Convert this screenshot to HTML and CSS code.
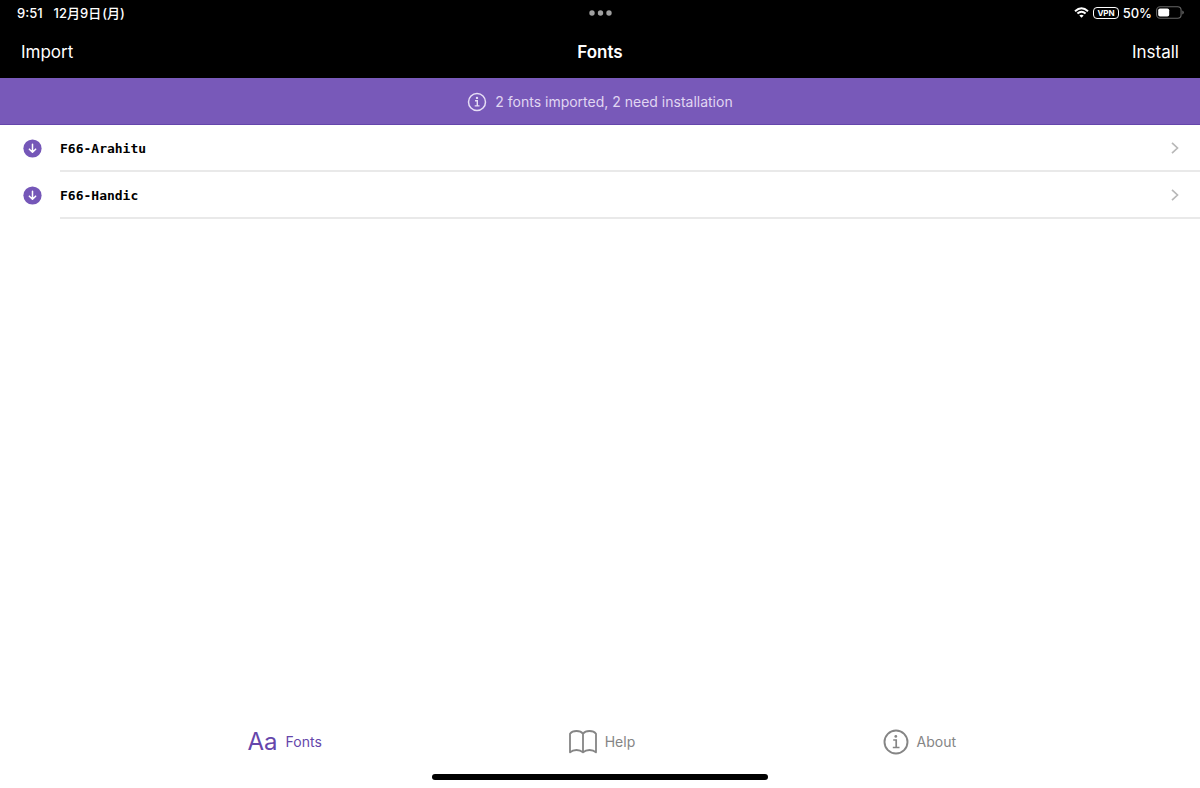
FILE: index.html
```html
<!DOCTYPE html>
<html lang="en">
<head>
<meta charset="utf-8">
<meta name="viewport" content="width=device-width, initial-scale=1">
<title>Fonts</title>
<link rel="stylesheet" href="styles.css">
</head>
<body>
<div class="app">
  <header class="top">
    <div class="status">
      <div class="status-left"><span>9:51</span><span lang="ja">12月9日<span class="weekday">(月)</span></span></div>
      <svg class="dots" width="24" height="6" viewBox="0 0 24 6" fill="#a0a0a0"><circle cx="3" cy="3" r="2.700"/><circle cx="11.500" cy="3" r="2.700"/><circle cx="20" cy="3" r="2.700"/></svg>
      <div class="status-right">
        <svg width="15" height="11" viewBox="0 0 15 11" fill="none" stroke="#fff" stroke-width="2"><path d="M1 4.200Q7.500-1.600 14 4.200M3.400 6.600Q7.500 2.900 11.600 6.600"/><path d="M7.500 10.800L5.300 8.600Q7.500 6.800 9.700 8.600Z" fill="#fff" stroke="none"/></svg>
        <span class="vpn">VPN</span>
        <span>50%</span>
        <svg width="28" height="13" viewBox="0 0 28 13"><rect x=".6" y=".8" width="24.500" height="11.400" rx="3.500" fill="none" stroke="#666" stroke-width="1.100"/><rect x="2.200" y="2.400" width="11" height="8.200" rx="1.800" fill="#fff"/><path d="M26.400 4.500v4q1.300-.5 1.300-2t-1.300-2" fill="#777"/></svg>
      </div>
    </div>
    <nav class="navbar">
      <button class="nav-button" type="button">Import</button>
      <h1 class="title">Fonts</h1>
      <button class="nav-button nav-end" type="button">Install</button>
    </nav>
  </header>
  <div class="banner">
    <svg width="20" height="20" viewBox="0 0 20 20" fill="none" stroke="#e6def5" stroke-width="1.500"><circle cx="10" cy="10" r="8.500"/><path d="M8 8.700h2.300v5M7.700 13.900h4.800" stroke-width="1.400"/><circle cx="10" cy="5.900" r="1.200" fill="#e6def5" stroke="none"/></svg>
    <span>2 fonts imported, 2 need installation</span>
  </div>
  <main class="content">
    <ul class="list">
      <li><button class="row" type="button">
        <svg class="badge" width="19" height="19" viewBox="0 0 20 20"><circle cx="10" cy="10" r="9.600" fill="#7557b8"/><path d="M10 5.500v8.300M6.700 10.700L10 14l3.300-3.300" fill="none" stroke="#fff" stroke-width="1.600" stroke-linecap="round" stroke-linejoin="round"/></svg>
        <span class="row-body"><span class="name">F66-Arahitu</span><svg width="8" height="12" viewBox="0 0 8 12" fill="none" stroke="#b8b8b8" stroke-width="1.700"><path d="M1 .8L6.500 6L1 11.200"/></svg></span>
      </button></li>
      <li><button class="row" type="button">
        <svg class="badge" width="19" height="19" viewBox="0 0 20 20"><circle cx="10" cy="10" r="9.600" fill="#7557b8"/><path d="M10 5.500v8.300M6.700 10.700L10 14l3.300-3.300" fill="none" stroke="#fff" stroke-width="1.600" stroke-linecap="round" stroke-linejoin="round"/></svg>
        <span class="row-body"><span class="name">F66-Handic</span><svg width="8" height="12" viewBox="0 0 8 12" fill="none" stroke="#b8b8b8" stroke-width="1.700"><path d="M1 .8L6.500 6L1 11.200"/></svg></span>
      </button></li>
    </ul>
  </main>
  <footer class="bottom">
    <nav class="tabs">
      <button class="tab active" type="button"><span class="letters">Aa</span><span>Fonts</span></button>
      <button class="tab" type="button">
        <svg width="28" height="24" viewBox="0 0 28 24" fill="none" stroke="#858585" stroke-width="1.800" stroke-linejoin="round"><path d="M14 3.800Q12 1 7.500 1T1 3.800V22.300Q3.500 20 7.500 20T14 22.300Q16.500 20 20.500 20T27 22.300V3.800Q25 1 20.500 1T14 3.800V22.300"/></svg>
        <span>Help</span></button>
      <button class="tab" type="button">
        <svg width="26" height="26" viewBox="0 0 26 26" fill="none" stroke="#858585" stroke-width="1.900"><circle cx="13" cy="13" r="11.500"/><path d="M10.200 11h3v7.200M9.800 18.500h6.700" stroke-width="1.700"/><circle cx="12.800" cy="7.400" r="1.400" fill="#858585" stroke="none"/></svg>
        <span>About</span></button>
    </nav>
    <div class="home"></div>
  </footer>
</div>
</body>
</html>
```
FILE: styles.css
```css
* { box-sizing: border-box; }
body { margin: 0; background: #fff; color: #000; font-family: Inter, "Noto Sans CJK JP", sans-serif; }
button { margin: 0; padding: 0; border: 0; background: none; color: inherit; font: inherit; cursor: pointer; }
svg { flex: none; display: block; }
.app { min-height: 100vh; display: flex; flex-direction: column; }
.top { background: #000; color: #fff; }
.status { display: grid; grid-template-columns: 1fr auto 1fr; align-items: center; height: 25px; padding: 0 16px 0 17px; font-size: 13px; font-weight: 500; line-height: 16px; }
.status-left { display: flex; gap: 11px; }
.weekday { padding-left: 1px; }
.status-right { display: flex; align-items: center; justify-content: flex-end; gap: 4px; }
.vpn { padding: 0 3px; border: 1px solid #fff; border-radius: 4px; font-size: 8px; font-weight: 700; line-height: 10px; }
.navbar { display: grid; grid-template-columns: 1fr auto 1fr; align-items: center; height: 53px; padding: 0 21px; font-size: 17px; line-height: 24px; }
.nav-button { justify-self: start; }
.nav-end { justify-self: end; }
.title { margin: 0; font-size: 17px; font-weight: 600; line-height: 24px; }
.banner { display: flex; align-items: center; justify-content: center; gap: 8px; height: 47px; padding-top: 1px; border-bottom: 1px solid #6546ab; background: #7859b9; color: #e0d6f2; font-size: 14px; line-height: 20px; }
.content { flex: 1; }
.list { margin: 0; padding: 0; list-style: none; }
.row { display: flex; align-items: stretch; width: 100%; height: 47px; padding-left: 23px; gap: 18px; text-align: left; }
.badge { align-self: center; }
.row-body { flex: 1; display: flex; align-items: center; justify-content: space-between; padding-right: 21px; border-bottom: 2px solid #e9e9e9; }
.name { padding-top: 2px; font-family: "DejaVu Sans Mono", monospace; font-size: 13px; font-weight: 700; line-height: 24px; }
.tabs { display: grid; grid-template-columns: repeat(3, 1fr); padding: 0 122px 0 126px; height: 50px; color: #858585; font-size: 14px; line-height: 20px; }
.tab { display: flex; align-items: center; justify-content: center; gap: 8px; }
.active { color: #6546ab; }
.letters { font-size: 24px; line-height: 26px; }
.home { width: 28%; height: 6px; margin: 7px auto 8px; border-radius: 3px; background: #000; }
```
